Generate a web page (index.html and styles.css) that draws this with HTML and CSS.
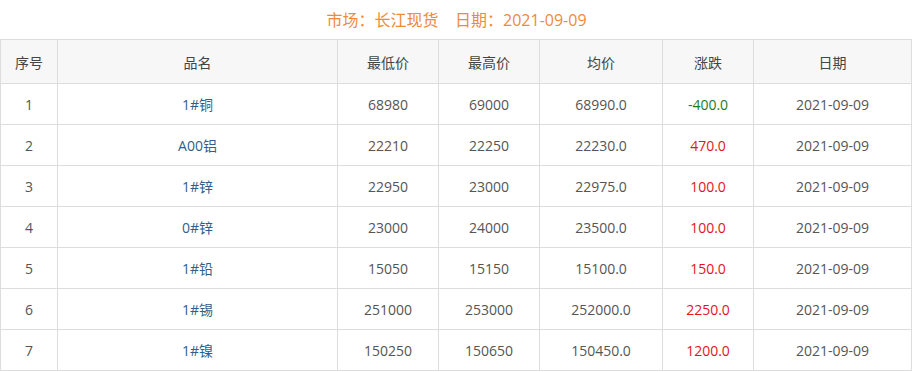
FILE: index.html
```html
<!DOCTYPE html>
<html lang="zh">
<head>
<meta charset="utf-8">
<link rel="stylesheet" href="styles.css">
</head>
<body>
<div class="title">市场：长江现货&nbsp;&nbsp;&nbsp;&nbsp;日期：2021-09-09</div>
<table class="grid">
  <colgroup>
    <col class="c1"><col class="c2"><col class="c3"><col class="c4"><col class="c5"><col class="c6"><col class="c7">
  </colgroup>
  <thead>
    <tr><th>序号</th><th>品名</th><th>最低价</th><th>最高价</th><th>均价</th><th>涨跌</th><th>日期</th></tr>
  </thead>
  <tbody>
    <tr><td>1</td><td class="name">1#铜</td><td>68980</td><td>69000</td><td>68990.0</td><td class="down">-400.0</td><td>2021-09-09</td></tr>
    <tr><td>2</td><td class="name">A00铝</td><td>22210</td><td>22250</td><td>22230.0</td><td class="up">470.0</td><td>2021-09-09</td></tr>
    <tr><td>3</td><td class="name">1#锌</td><td>22950</td><td>23000</td><td>22975.0</td><td class="up">100.0</td><td>2021-09-09</td></tr>
    <tr><td>4</td><td class="name">0#锌</td><td>23000</td><td>24000</td><td>23500.0</td><td class="up">100.0</td><td>2021-09-09</td></tr>
    <tr><td>5</td><td class="name">1#铅</td><td>15050</td><td>15150</td><td>15100.0</td><td class="up">150.0</td><td>2021-09-09</td></tr>
    <tr><td>6</td><td class="name">1#锡</td><td>251000</td><td>253000</td><td>252000.0</td><td class="up">2250.0</td><td>2021-09-09</td></tr>
    <tr><td>7</td><td class="name">1#镍</td><td>150250</td><td>150650</td><td>150450.0</td><td class="up">1200.0</td><td>2021-09-09</td></tr>
  </tbody>
</table>
</body>
</html>
```

FILE: styles.css
```css
html, body {
  margin: 0;
  padding: 0;
  background: #fff;
}
body {
  font-family: "Open Sans", "Noto Sans CJK SC", "Noto Sans", sans-serif;
  color: #555;
  font-size: 14px;
}
.title {
  height: 39px;
  line-height: 40px;
  text-align: center;
  color: #ef8a3a;
  font-size: 16px;
}
.grid {
  border-collapse: collapse;
  table-layout: fixed;
  width: 911px;
}
.c1 { width: 57px; }
.c2 { width: 280px; }
.c3 { width: 101px; }
.c4 { width: 101px; }
.c5 { width: 123px; }
.c6 { width: 91px; }
.c7 { width: 158px; }
.grid th, .grid td {
  border: 1px solid #ddd;
  text-align: center;
  padding: 0;
  font-weight: normal;
}
.grid th {
  height: 43px;
  background: #f7f7f7;
  color: #444;
}
.grid td {
  height: 40px;
}
.grid td.name { color: #2f5f8a; }
.grid td.down { color: #1e7b1e; }
.grid td.up { color: #e5131c; }
```
